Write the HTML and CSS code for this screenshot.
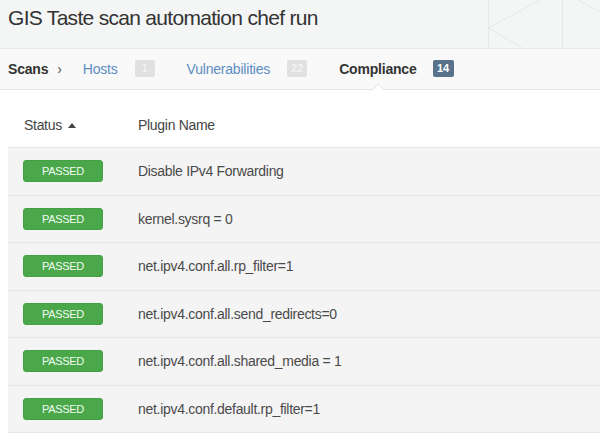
FILE: index.html
```html
<!DOCTYPE html>
<html>
<head>
<meta charset="utf-8">
<link rel="stylesheet" href="styles.css">
</head>
<body>
<header class="page-head">
  <h1 class="title">GIS Taste scan automation chef run</h1>
  <svg class="deco" width="130" height="48" viewBox="0 0 130 48">
    <g fill="none" stroke="#e4e8e6" stroke-width="1">
      <line x1="18.5" y1="0" x2="18.5" y2="48"/>
      <line x1="18.5" y1="28" x2="70" y2="0"/>
      <line x1="18.5" y1="28" x2="52" y2="48"/>
      <line x1="92.5" y1="0" x2="92.5" y2="48"/>
      <line x1="108" y1="0" x2="130" y2="12"/>
    </g>
  </svg>
</header>
<nav class="tabs">
  <span class="crumb">Scans</span>
  <span class="sep">›</span>
  <a class="tab">Hosts <span class="count">1</span></a>
  <a class="tab">Vulnerabilities <span class="count">22</span></a>
  <a class="tab active"><span class="tab-label">Compliance</span> <span class="count dark">14</span></a>
</nav>
<section class="results">
  <div class="thead">
    <div class="th">Status <span class="sort"></span></div>
    <div class="th">Plugin Name</div>
  </div>
  <div class="row"><div class="cell"><span class="status">PASSED</span></div><div class="cell name">Disable IPv4 Forwarding</div></div>
  <div class="row"><div class="cell"><span class="status">PASSED</span></div><div class="cell name">kernel.sysrq = 0</div></div>
  <div class="row"><div class="cell"><span class="status">PASSED</span></div><div class="cell name">net.ipv4.conf.all.rp_filter=1</div></div>
  <div class="row"><div class="cell"><span class="status">PASSED</span></div><div class="cell name">net.ipv4.conf.all.send_redirects=0</div></div>
  <div class="row"><div class="cell"><span class="status">PASSED</span></div><div class="cell name">net.ipv4.conf.all.shared_media = 1</div></div>
  <div class="row"><div class="cell"><span class="status">PASSED</span></div><div class="cell name">net.ipv4.conf.default.rp_filter=1</div></div>
</section>
</body>
</html>
```

FILE: styles.css
```css
* { box-sizing: border-box; }
html, body {
  margin: 0;
  padding: 0;
  width: 600px;
  height: 438px;
  overflow: hidden;
  background: #ffffff;
  font-family: "Liberation Sans", Arial, sans-serif;
  color: #444;
}
.page-head {
  position: relative;
  height: 49px;
  background: #f4f6f5;
  border-bottom: 1px solid #e6e9e7;
  padding: 4px 0 0 8px;
}
.title {
  margin: 0;
  font-size: 21px;
  letter-spacing: -0.7px;
  line-height: 28px;
  font-weight: normal;
  color: #333;
  position: relative;
  z-index: 1;
}
.deco {
  position: absolute;
  right: 0;
  top: 0;
}
.tabs {
  height: 41px;
  background: #f8f9f8;
  border-bottom: 1px solid #e4e6e5;
  display: flex;
  align-items: center;
  padding: 0 0 1px 8px;
  font-size: 14px;
  letter-spacing: -0.2px;
}
.crumb {
  font-weight: bold;
  color: #333;
}
.sep {
  margin-left: 9px;
  margin-right: 21px;
  color: #555;
  font-size: 14px;
}
.tab {
  display: flex;
  align-items: center;
  gap: 17px;
  margin-right: 32px;
  color: #5d8dc2;
}
.tab.active {
  font-weight: bold;
  color: #333;
  gap: 16px;
}
.tab-label {
  position: relative;
}
.tab-label::after {
  content: "";
  position: absolute;
  left: 50%;
  margin-left: -4px;
  bottom: -17px;
  width: 8px;
  height: 8px;
  background: #fff;
  border-left: 1px solid #e4e6e5;
  border-top: 1px solid #e4e6e5;
  transform: rotate(45deg);
}
.count {
  display: inline-block;
  width: 20px;
  height: 17px;
  line-height: 17px;
  border-radius: 2px;
  background: #e0e1e0;
  color: #f2f2f2;
  font-size: 11px;
  font-weight: bold;
  letter-spacing: 0;
  text-align: center;
}
.count.dark {
  width: 21px;
  background: #58728c;
  color: #fff;
}
.results {
  margin-left: 8px;
}
.thead {
  display: grid;
  grid-template-columns: 130px 1fr;
  height: 58px;
  align-items: end;
  padding-bottom: 14px;
  border-bottom: 1px solid #e6e6e6;
  font-size: 14px;
  letter-spacing: -0.3px;
  color: #444;
}
.th:first-child {
  padding-left: 16px;
}
.sort {
  display: inline-block;
  width: 0;
  height: 0;
  border-left: 4px solid transparent;
  border-right: 4px solid transparent;
  border-bottom: 5px solid #444;
  margin-left: 3px;
  vertical-align: 2px;
}
.row {
  display: grid;
  grid-template-columns: 130px 1fr;
  align-items: center;
  height: 47.5px;
  background: #f4f4f4;
  border-bottom: 1px solid #e6e6e6;
}
.cell:first-child {
  padding-left: 15px;
}
.status {
  display: block;
  width: 80px;
  height: 22px;
  line-height: 20px;
  border-radius: 3px;
  background: #4aa84b;
  border: 1px solid #44a045;
  color: #f2fbf2;
  font-size: 11px;
  letter-spacing: -0.3px;
  text-align: center;
}
.name {
  font-size: 14px;
  letter-spacing: -0.3px;
  color: #4a4a4a;
}
```
